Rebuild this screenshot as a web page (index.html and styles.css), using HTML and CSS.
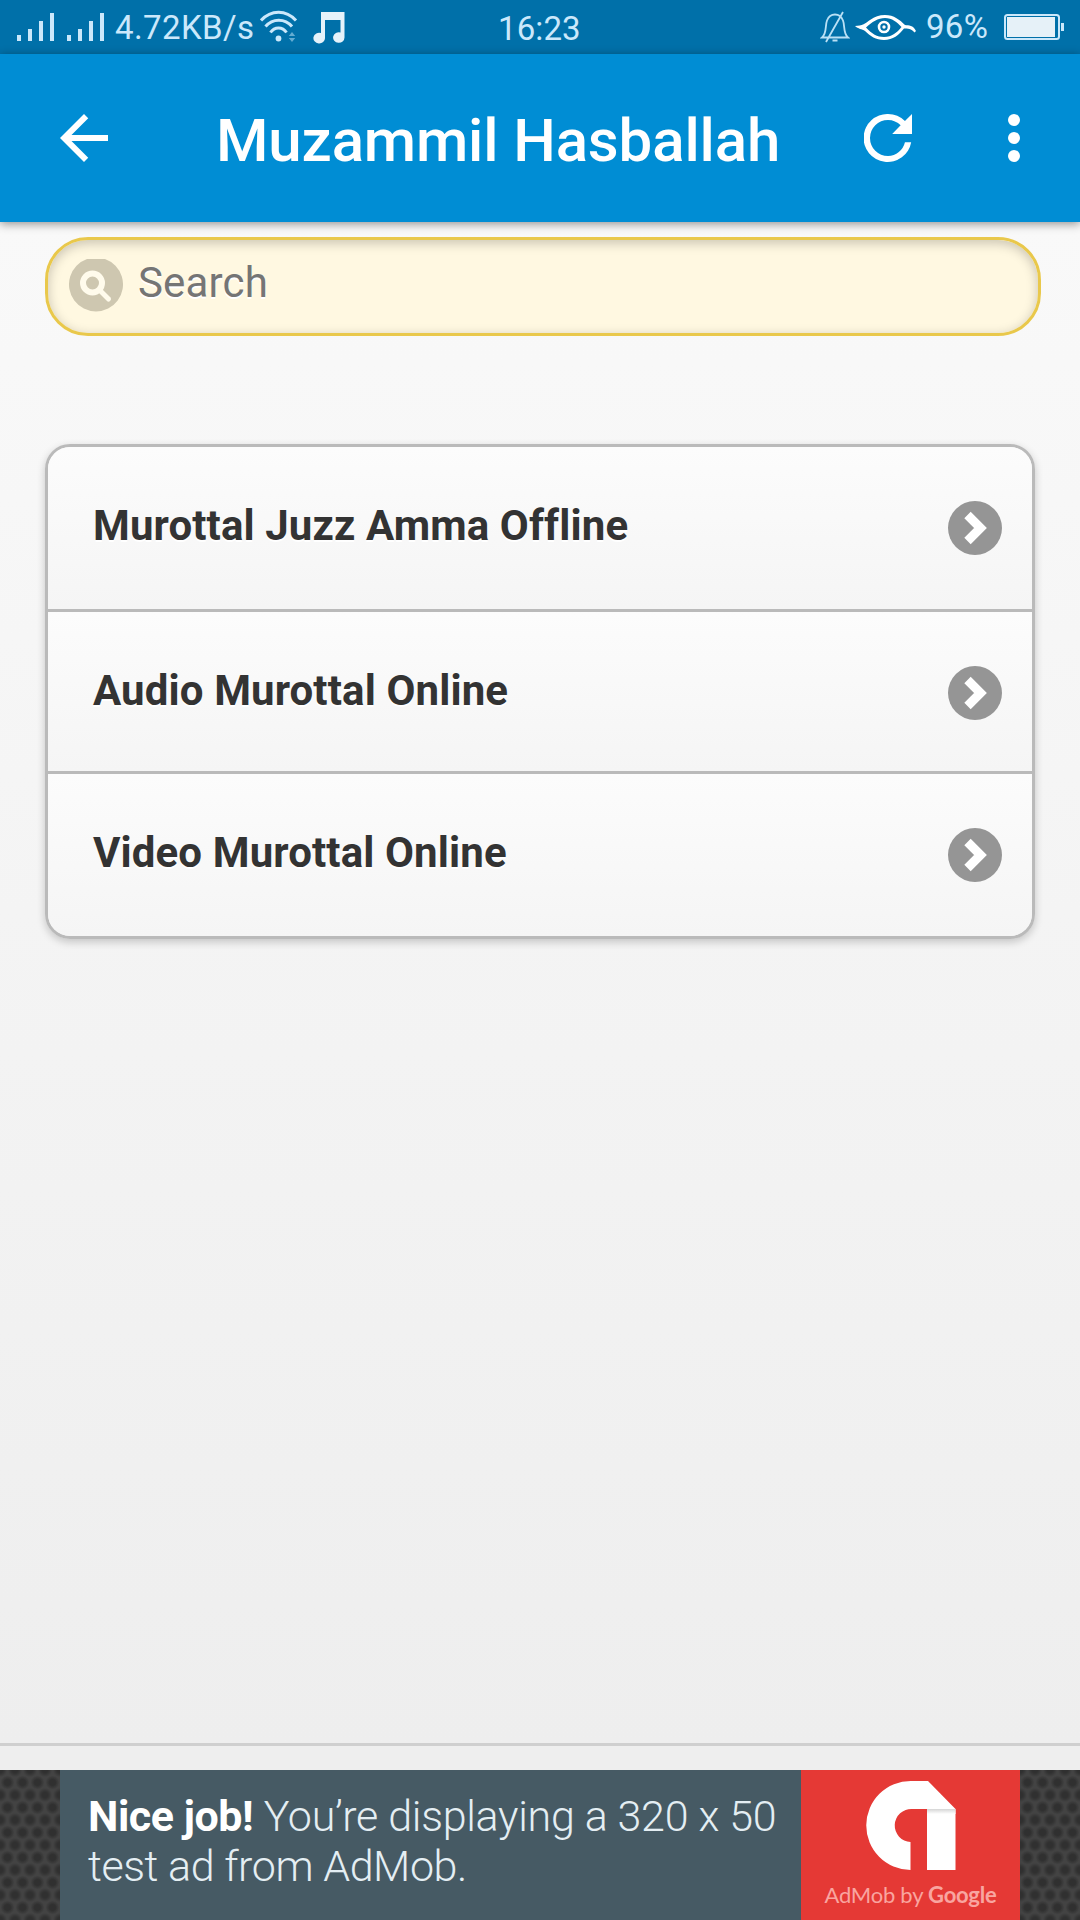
FILE: index.html
```html
<!DOCTYPE html>
<html lang="id">
<head>
<meta charset="utf-8">
<title>Muzammil Hasballah</title>
<link rel="stylesheet" href="styles.css">
</head>
<body>
<div class="screen">
  <div class="status">
    <div class="status-left">
      <svg class="signal" width="88" height="30" viewBox="0 0 88 30" fill="#cbe8fb"><path d="M0 23h4v6H0zM11 17h4v12h-4zM22 9h4v20h-4zM33 1h4v28h-4zM50 23h4v6h-4zM61 17h4v12h-4zM72 9h4v20h-4zM83 1h4v28h-4z"/></svg>
      <span class="speed">4.72KB/s</span>
      <svg class="wifi" width="40" height="32" viewBox="0 0 40 32" fill="none" stroke="#cbe8fb" stroke-width="3"><path d="M1 10.500C11-.5 26-.5 36 10.500M5.500 16.500c7-8.500 19.500-8.500 26.500 0M10.500 22.500c4-6 12-6 16 0"/><circle cx="18.500" cy="28.500" r="2.900" fill="#cbe8fb" stroke="none"/><path d="M28.800 26l3.200-4 3.200 4zM28.800 28l3.200 4 3.200-4z" fill="#63acd2" stroke="none"/></svg>
      <svg class="note" width="32" height="34" viewBox="0 0 32 34" fill="#e6f2fa"><path d="M8 1h23.500v25.500a5.700 5.300 0 1 1-4-5V9H12v18a5.800 5.400 0 1 1-4-5z"/></svg>
    </div>
    <span class="clock">16:23</span>
    <div class="status-right">
      <svg class="bell" width="30" height="33" viewBox="0 0 30 33" fill="none" stroke="#b9e0f5" stroke-width="1.800"><path d="M2 26.500c5-4 3-12 5-17 1.500-4 4-6 8-6s6.500 2 8 6c2 5 0 13 5 17zM12.500 29.500h5M23 1L6 31"/></svg>
      <svg class="eye" width="62" height="28" viewBox="0 0 62 28"><path d="M0 12c7 0 11-3 15-6 5-3.500 9-5 15-5 9 0 15 5 20 10 4 .5 8 0 11 6l-1.500 1.500c-3-4-7-4-10.500-4C44 21 38 26 29 26c-8 0-14-4-19-9-3-2-7-2-10-5zm11 1.500C17 20 22 23 29 23c8 0 13-4.500 17.500-10C42 8 37 4 30 4s-13 4-19 9.500z" fill="#fff"/><circle cx="29" cy="13" r="5" fill="none" stroke="#fff" stroke-width="2.600"/><circle cx="29" cy="13" r="1.700" fill="#fff"/></svg>
      <span class="percent">96%</span>
      <svg class="battery" width="60" height="26" viewBox="0 0 60 26"><rect x="1" y="1" width="54" height="24" rx="2.500" fill="none" stroke="#cbe8fb" stroke-width="2"/><path d="M3 3h48v20H3z" fill="#e6f1f8"/><path d="M57 9h3v8h-3z" fill="#cbe8fb"/></svg>
    </div>
  </div>

  <header class="bar">
    <svg class="back" width="48" height="48" viewBox="4 4 16 16" fill="#fff"><path d="M20 11H7.830l5.590-5.590L12 4l-8 8 8 8 1.410-1.410L7.830 13H20z"/></svg>
    <h1>Muzammil Hasballah</h1>
    <svg class="reload" width="48" height="48" viewBox="4 4 16 16" fill="#fff"><path d="M17.650 6.350A7.958 7.958 0 0 0 12 4a8 8 0 1 0 7.730 9.400h-2.080A5.990 5.990 0 0 1 12 18a6 6 0 1 1 0-12c1.660 0 3.140.69 4.220 1.780L13.400 10.650H20V4z"/></svg>
    <svg class="more" width="12" height="48" viewBox="0 0 12 48" fill="#fff"><circle cx="6" cy="6" r="6"/><circle cx="6" cy="24" r="6"/><circle cx="6" cy="42" r="6"/></svg>
  </header>

  <main>
    <div class="search">
      <svg width="54" height="54" viewBox="0 0 54 54"><path d="M18 1h18a27 27 0 1 1-18 0z" fill="#cec7b0"/><g fill="none" stroke="#fffbec" stroke-linecap="round"><circle cx="23.500" cy="25" r="9.500" stroke-width="6"/><path d="M31 32.500l8.500 8.500" stroke-width="5"/></g></svg>
      <span>Search</span>
    </div>
    <ul class="list">
      <li><span>Murottal Juzz Amma Offline</span><svg width="54" height="54" viewBox="0 0 54 54"><circle cx="27" cy="27" r="27" fill="#959595"/><path d="M19.500 14l13 13-13 13" fill="none" stroke="#fff" stroke-width="9"/></svg></li>
      <li><span>Audio Murottal Online</span><svg width="54" height="54" viewBox="0 0 54 54"><circle cx="27" cy="27" r="27" fill="#959595"/><path d="M19.500 14l13 13-13 13" fill="none" stroke="#fff" stroke-width="9"/></svg></li>
      <li><span>Video Murottal Online</span><svg width="54" height="54" viewBox="0 0 54 54"><circle cx="27" cy="27" r="27" fill="#959595"/><path d="M19.500 14l13 13-13 13" fill="none" stroke="#fff" stroke-width="9"/></svg></li>
    </ul>
  </main>

  <div class="foot"></div>

  <div class="ad">
    <p class="ad-text"><b>Nice job!</b> <span class="ad-a">You’re displaying a 320 x 50</span><br><span class="ad-b">test ad from AdMob.</span></p>
    <div class="ad-logo">
      <svg width="90" height="92" viewBox="0 0 90 92"><defs><linearGradient id="fold" x1="0" y1="0" x2="0" y2="1"><stop offset="0" stop-color="#d5d5d5"/><stop offset="1" stop-color="#fff"/></linearGradient></defs><path d="M45 1h17l27.500 28v61H61V29H46a16 16 0 0 0-1.500 33v28A44.500 44.500 0 0 1 45 1z" fill="#fff"/><path d="M61 29h28.500v5H61z" fill="url(#fold)"/></svg>
      <div class="ad-name">AdMob by <b>Google</b></div>
    </div>
  </div>
</div>
</body>
</html>
```
FILE: styles.css
```css
* { box-sizing: border-box; }
body { margin: 0; font-family: Roboto, "Liberation Sans", sans-serif; }
svg { display: block; flex: none; }
.screen { width: 1080px; height: 1920px; display: flex; flex-direction: column; overflow: hidden; background: #eee; }

.status { height: 54px; flex: none; display: flex; justify-content: space-between; background: #0070a9; color: #cbe8fb; font-size: 33px; line-height: 54px; white-space: nowrap; }
.status-left, .status-right { display: flex; }
.status-left { width: 498px; padding-left: 17px; }
.signal { margin-top: 12px; }
.speed { width: 145px; margin-left: 10px; padding-top: 1px; letter-spacing: .4px; }
.wifi { margin-top: 10px; }
.note { margin: 11px 0 0 13px; }
.clock { width: 91px; padding-top: 2px; letter-spacing: .1px; }
.status-right { width: 491px; padding-left: 230px; }
.bell { margin: 11px 0 0 1px; }
.eye { margin: 14px 0 0 5px; }
.percent { width: 68px; margin-left: 9px; letter-spacing: .3px; }
.battery { margin: 14px 0 0 10px; }

.bar { height: 168px; flex: none; display: flex; align-items: center; background: #008dd4; padding-left: 60px; box-shadow: 0 2px 9px rgba(0,0,0,.42); position: relative; }
.bar h1 { margin: 0 0 0 108px; padding-top: 5px; width: 572px; font-size: 60px; font-weight: 500; letter-spacing: -.13px; color: #fff; white-space: nowrap; }
.reload { margin-left: 76px; }
.more { margin-left: 96px; }

main { flex: 1; padding: 15px 39px 0 45px; background: linear-gradient(#f9f9f9, #eee); }
.search { height: 99px; display: flex; border: 3px solid #e9c84b; border-radius: 43px; background: #fff8e1; box-shadow: inset 0 3px 12px rgba(0,0,0,.22); padding: 18px 0 0 21px; color: #757575; font-size: 42px; line-height: 50px; text-shadow: 0 2px 0 #fff; }
.search span { margin: 0 0 0 15px; letter-spacing: .15px; }

.list { list-style: none; width: 990px; margin: 108px 0 0; padding: 0; border: 3px solid #bababa; border-radius: 25px; overflow: hidden; box-shadow: 0 3px 9px rgba(0,0,0,.2); }
.list li { height: 165px; display: flex; justify-content: space-between; align-items: center; padding: 0 30px 0 45px; background: linear-gradient(#fcfcfc, #f5f5f5); border-bottom: 3px solid #bababa; font-size: 42px; font-weight: 700; letter-spacing: .12px; color: #333; text-shadow: 0 2px 0 #fff; }
.list li:nth-child(2) { height: 162px; padding-top: 2px; }
.list li:last-child { height: 162px; border-bottom: 0; }
.list span { padding-bottom: 6px; }
.list li:nth-child(2) span { padding-bottom: 4px; }

.foot { height: 27px; flex: none; border-top: 3px solid #cfcfcf; background: #eee; }

.ad { height: 150px; flex: none; display: flex; padding: 0 60px; background-color: #434343; background-image: radial-gradient(circle at 50% 50%, #303030 3px, transparent 7px), radial-gradient(circle at 50% 50%, #303030 3px, transparent 7px); background-size: 15px 25px; background-position: 0 0, 7.500px 12.500px; }
.ad-text { margin: 0; width: 741px; padding: 21px 0 0 28px; background: #465a64; color: #e4eef3; font-size: 43px; font-weight: 300; line-height: 50px; white-space: nowrap; }
.ad-text b { color: #fff; font-weight: 700; letter-spacing: -.45px; }
.ad-a { letter-spacing: -.3px; }
.ad-b { letter-spacing: -.42px; }
.ad-logo { width: 219px; display: flex; flex-direction: column; align-items: center; padding-top: 10px; background: #e53935; }
.ad-name { margin-top: 10px; font: 400 22px/26px Lato, sans-serif; letter-spacing: -.25px; color: #f9a5a0; white-space: nowrap; }
.ad-name b { font-weight: 700; }
```
